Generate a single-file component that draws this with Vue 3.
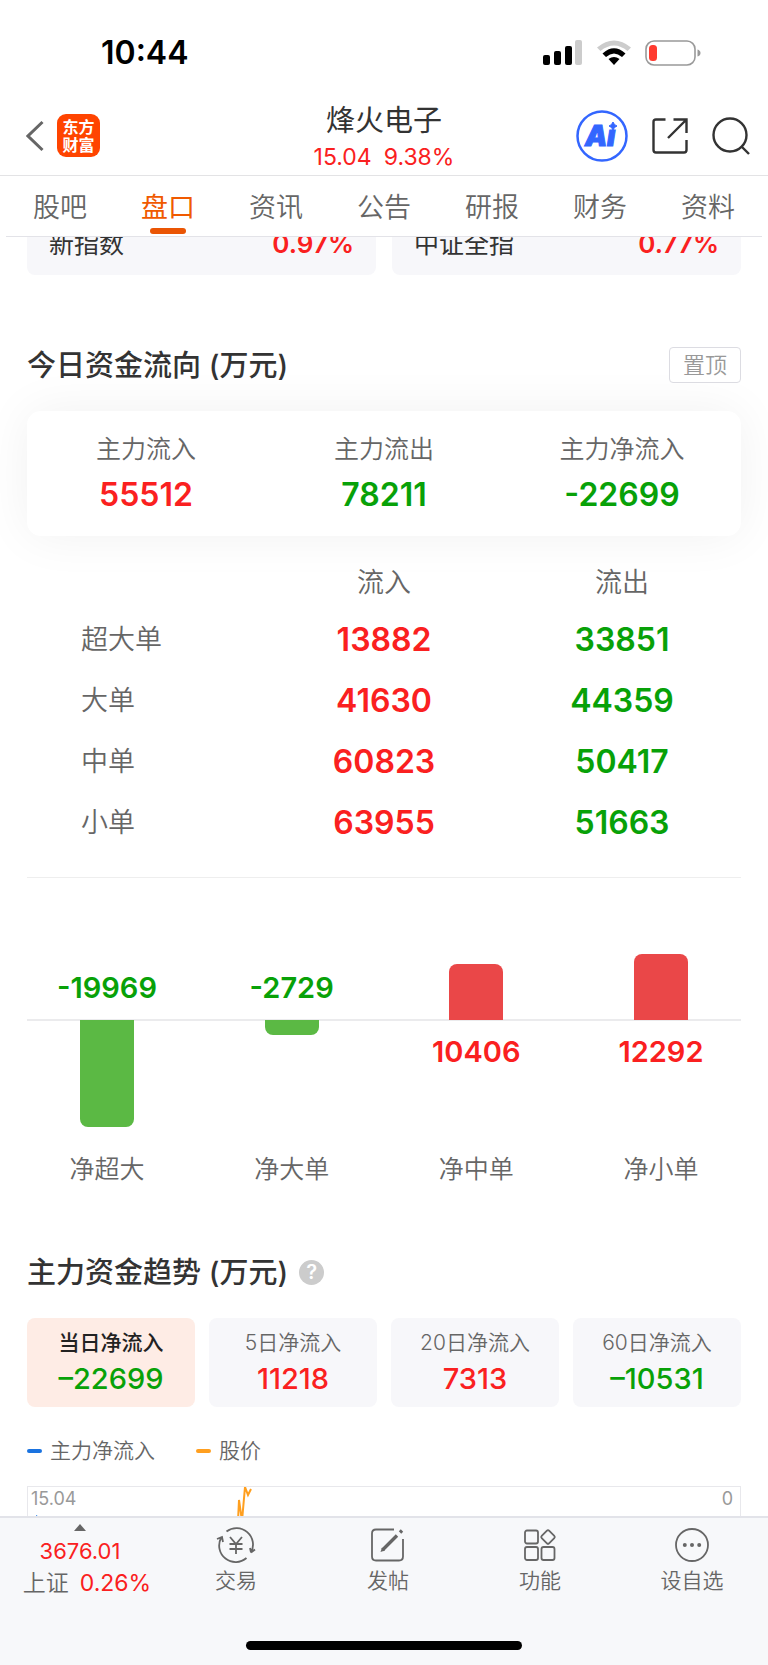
<script setup>
import { ref } from 'vue'

const navTabs = ['股吧', '盘口', '资讯', '公告', '研报', '财务', '资料']
const activeNav = ref('盘口')

const indices = [
  { name: '新指数', change: '0.97%' },
  { name: '中证全指', change: '0.77%' },
]

const summary = [
  { label: '主力流入', value: '55512', tone: 'up' },
  { label: '主力流出', value: '78211', tone: 'down' },
  { label: '主力净流入', value: '-22699', tone: 'down' },
]

const orders = [
  { name: '超大单', inflow: 13882, outflow: 33851 },
  { name: '大单', inflow: 41630, outflow: 44359 },
  { name: '中单', inflow: 60823, outflow: 50417 },
  { name: '小单', inflow: 63955, outflow: 51663 },
]

const nets = [
  { name: '净超大', value: -19969 },
  { name: '净大单', value: -2729 },
  { name: '净中单', value: 10406 },
  { name: '净小单', value: 12292 },
]
const maxBar = 107
const maxNet = Math.max(...nets.map((n) => Math.abs(n.value)))
const barHeight = (v) => ({ height: Math.round((Math.abs(v) / maxNet) * maxBar) + 'px' })

const periods = [
  { label: '当日净流入', value: '–22699', tone: 'down' },
  { label: '5日净流入', value: '11218', tone: 'up' },
  { label: '20日净流入', value: '7313', tone: 'up' },
  { label: '60日净流入', value: '–10531', tone: 'down' },
]
const activePeriod = ref('当日净流入')
</script>

<template>
  <div class="app">
    <div class="status">
      <span class="clock">10:44</span>
      <div class="status-icons">
        <svg width="40" height="26" viewBox="0 0 40 26" aria-hidden="true">
          <rect x="0" y="15" width="7" height="10" rx="2" />
          <rect x="11" y="11" width="7" height="14" rx="2" />
          <rect x="22" y="6" width="7" height="19" rx="2" />
          <rect x="32" y="0" width="7" height="25" rx="2" fill="#ccc" />
        </svg>
        <svg width="36" height="26" viewBox="0 0 36 26" aria-hidden="true">
          <path d="M1 7.500Q18-6.500 35 7.500L31.500 11Q18 0 4.500 11Z" fill="#ccc" />
          <path d="M6.500 13.500Q18 3 29.500 13.500L26 17Q18 10 10 17Z" />
          <path d="M12.500 19Q18 15 23.500 19L18 25Z" />
        </svg>
        <svg width="56" height="26" viewBox="0 0 56 26" aria-hidden="true">
          <rect x="1" y="1" width="49" height="24" rx="8" fill="none" stroke="#999" stroke-width="1.600" />
          <rect x="4" y="5" width="8" height="16" rx="3.500" fill="#ff3b30" />
          <path d="M52.500 9.500Q55.500 10.500 55.500 13Q55.500 15.500 52.500 16.500Z" fill="#999" />
        </svg>
      </div>
    </div>

    <header class="header">
      <div class="header-side header-home">
        <button class="icon-btn" aria-label="返回">
          <svg width="18" height="32" viewBox="0 0 18 32"><path d="M16.500 2L2 16L16.500 30" fill="none" stroke="#666" stroke-width="3" /></svg>
        </button>
        <a class="logo" href="#"><span>东方</span><span>财富</span></a>
      </div>
      <div class="stock">
        <h1>烽火电子</h1>
        <p class="up"><span>15.04</span><span>9.38%</span></p>
      </div>
      <div class="header-side header-actions">
        <button class="icon-btn" aria-label="智能助手">
          <svg width="52" height="52" viewBox="0 0 52 52">
            <circle cx="26" cy="26" r="24.500" fill="none" stroke="#3366ff" stroke-width="2.500" />
            <text class="ai" x="9" y="36">A</text>
            <text class="ai" x="31" y="36">ı</text>
            <path d="M37 12Q38 15 41 16Q38 17 37 20Q36 17 33 16Q36 15 37 12Z" fill="#3366ff" stroke="#3366ff" />
          </svg>
        </button>
        <button class="icon-btn" aria-label="分享">
          <svg width="36" height="36" viewBox="0 0 36 36" fill="none" stroke="#333" stroke-width="2.400">
            <path d="M13.500 1.500H4Q1.500 1.500 1.500 4V32Q1.500 34.500 4 34.500H32Q34.500 34.500 34.500 32V22M21.500 1.500H34.500V15M34 2L16 20" />
          </svg>
        </button>
        <button class="icon-btn" aria-label="搜索">
          <svg width="38" height="38" viewBox="0 0 38 38" fill="none" stroke="#333" stroke-width="2.400">
            <circle cx="18" cy="18" r="16.500" /><path d="M29.500 29.500L37 37" />
          </svg>
        </button>
      </div>
    </header>

    <nav class="nav">
      <a v-for="t in navTabs" :key="t" href="#" :class="{ active: t === activeNav }" @click.prevent="activeNav = t">{{ t }}</a>
    </nav>

    <main class="content">
      <div class="indices">
        <div v-for="i in indices" :key="i.name" class="index-card">
          <span>{{ i.name }}</span><strong class="up">{{ i.change }}</strong>
        </div>
      </div>

      <section class="flow">
        <div class="section-head">
          <h2>今日资金流向 (万元)</h2>
          <button class="pin">置顶</button>
        </div>
        <div class="summary">
          <div v-for="s in summary" :key="s.label">
            <span class="label">{{ s.label }}</span>
            <strong :class="s.tone">{{ s.value }}</strong>
          </div>
        </div>
        <table>
          <thead>
            <tr><td></td><th scope="col">流入</th><th scope="col">流出</th></tr>
          </thead>
          <tbody>
            <tr v-for="o in orders" :key="o.name">
              <th scope="row">{{ o.name }}</th>
              <td class="up">{{ o.inflow }}</td>
              <td class="down">{{ o.outflow }}</td>
            </tr>
          </tbody>
        </table>
      </section>

      <section class="net" aria-label="净流入">
        <div class="plot above">
          <div v-for="n in nets" :key="n.name" class="col">
            <span v-if="n.value < 0" class="down">{{ n.value }}</span>
            <i v-else class="bar bar-up" :style="barHeight(n.value)"></i>
          </div>
        </div>
        <div class="plot below">
          <div v-for="n in nets" :key="n.name" class="col">
            <i v-if="n.value < 0" class="bar bar-down" :style="barHeight(n.value)"></i>
            <span v-else class="up">{{ n.value }}</span>
          </div>
        </div>
        <div class="plot names">
          <div v-for="n in nets" :key="n.name" class="col">{{ n.name }}</div>
        </div>
      </section>

      <section class="trend">
        <div class="trend-head">
          <h2>主力资金趋势 (万元)</h2>
          <button class="help" aria-label="说明">?</button>
        </div>
        <div class="periods">
          <button v-for="p in periods" :key="p.label" :class="{ active: p.label === activePeriod }" @click="activePeriod = p.label">
            <span>{{ p.label }}</span>
            <strong :class="p.tone">{{ p.value }}</strong>
          </button>
        </div>
        <div class="legend">
          <span class="key-main">主力净流入</span>
          <span class="key-price">股价</span>
        </div>
        <div class="chart">
          <span>15.04</span>
          <svg class="lines" width="230" height="160" viewBox="0 0 230 160" fill="none" aria-hidden="true">
            <path d="M210 34L211 13L214 34L217 0L220 8L223 2" stroke="#ff9f1f" stroke-width="2" />
            <path d="M8 28L13 31V38L8 34Z" fill="#1a73e0" />
          </svg>
          <span>0</span>
        </div>
      </section>
    </main>

    <footer class="bottom">
      <div class="actions">
        <button class="market">
          <svg width="12" height="7" viewBox="0 0 12 7" aria-hidden="true"><path d="M0 7L6 0L12 7Z" fill="#666" /></svg>
          <span class="up">3676.01</span>
          <span class="market-row">上证<b class="up">0.26%</b></span>
        </button>
        <button>
          <svg width="40" height="36" viewBox="0 0 40 36" fill="none" stroke="#666" stroke-width="1.800">
            <path d="M10.500 4.500A16.500 16.500 0 0 1 35 25.500M35 25.500L34 21M35 25.500L39 22.500M30.500 31A16.500 16.500 0 0 1 5 11M1 12L6 10L7 15" />
            <path d="M14 10L20 17L26 10M20 17V27M13.500 17H26.500M13.500 22H26.500" />
          </svg>
          <span>交易</span>
        </button>
        <button>
          <svg width="40" height="36" viewBox="0 0 40 36" fill="none" stroke="#666" stroke-width="1.800">
            <path d="M26 2.500H8Q4 2.500 4 6.500V29.500Q4 33.500 8 33.500H31Q35 33.500 35 29.500V12" />
            <path d="M14.500 23L29 8.500M32 5.500L34 3.500" stroke-width="3.400" />
            <path d="M12.500 25L14 20.500L17 23.500Z" fill="#666" stroke="none" />
          </svg>
          <span>发帖</span>
        </button>
        <button>
          <svg width="40" height="36" viewBox="0 0 40 36" fill="none" stroke="#666" stroke-width="1.800">
            <rect x="5" y="3.500" width="13" height="13" rx="2" />
            <rect x="5" y="20" width="13" height="13" rx="2" />
            <rect x="21.500" y="20" width="13" height="13" rx="2" />
            <rect x="22.800" y="4.800" width="10.400" height="10.400" rx="1.500" transform="rotate(45 28 10)" />
          </svg>
          <span>功能</span>
        </button>
        <button>
          <svg width="40" height="36" viewBox="0 0 40 36" fill="none" stroke="#666" stroke-width="1.800">
            <circle cx="20" cy="18" r="16" />
            <g fill="#666" stroke="none"><circle cx="12.800" cy="18" r="2" /><circle cx="20" cy="18" r="2" /><circle cx="27.200" cy="18" r="2" /></g>
          </svg>
          <span>设自选</span>
        </button>
      </div>
      <div class="home-bar"></div>
    </footer>
  </div>
</template>

<style>
body {
  background: #fff;
}
</style>

<style scoped>
.app,
.app * {
  box-sizing: border-box;
}
.app {
  display: flex;
  flex-direction: column;
  height: 100vh;
  overflow: hidden;
  background: #fff;
  color: #333;
  font-family: Inter, "Noto Sans CJK SC", sans-serif;
  font-size: 25px;
  line-height: 32px;
  font-weight: 350;
}
h1,
h2,
p {
  margin: 0;
}
button {
  padding: 0;
  border: 0;
  background: none;
  color: inherit;
  font: inherit;
}
a {
  color: inherit;
  text-decoration: none;
}
svg {
  display: block;
  flex: none;
}
.up {
  color: #fa2020;
}
.down {
  color: #08a108;
}

.status {
  flex: none;
  display: flex;
  align-items: center;
  justify-content: space-between;
  height: 96px;
  padding: 10px 67px 0 101px;
}
.clock {
  color: #000;
  font-size: 32px;
  font-weight: 600;
}
.status-icons {
  display: flex;
  gap: 13px;
}

.header {
  flex: none;
  display: grid;
  grid-template-columns: 1fr auto 1fr;
  align-items: center;
  height: 80px;
  padding: 0 18px;
  border-bottom: 1px solid #e3e3e5;
}
.header-side {
  display: flex;
  align-items: center;
  gap: 13px;
}
.header-home {
  padding-left: 8px;
}
.header-actions {
  justify-content: flex-end;
  gap: 24px;
}
.logo {
  display: flex;
  flex-direction: column;
  justify-content: center;
  align-items: center;
  width: 43px;
  height: 43px;
  border-radius: 9px;
  background: #ff4400;
  color: #fff;
  font-size: 16px;
  line-height: 18px;
  font-weight: 700;
}
.ai {
  fill: #3366ff;
  stroke: #3366ff;
  stroke-width: 1;
  font-size: 28px;
  font-weight: 900;
  font-style: italic;
}
.stock {
  padding-top: 2px;
  text-align: center;
}
.stock h1 {
  font-size: 29px;
  line-height: 40px;
  font-weight: 400;
}
.stock p {
  display: flex;
  justify-content: center;
  gap: 12px;
  font-size: 23px;
  line-height: 32px;
  font-weight: 400;
}

.nav {
  flex: none;
  display: grid;
  grid-template-columns: repeat(7, 1fr);
  height: 61px;
  margin: 0 6px;
  border-bottom: 1px solid #e3e3e8;
  color: #666;
  font-size: 27px;
  line-height: 64px;
  text-align: center;
}
.nav a {
  position: relative;
  height: 60px;
}
.nav .active {
  color: #f05a00;
  font-weight: 400;
}
.nav .active::after {
  content: "";
  position: absolute;
  left: 50%;
  bottom: 2px;
  width: 36px;
  height: 6px;
  margin-left: -18px;
  border-radius: 3px;
  background: #ea5504;
}

.content {
  flex: 1;
  min-height: 0;
  overflow: hidden;
  padding: 0 27px;
}
.indices {
  display: grid;
  grid-template-columns: 1fr 1fr;
  gap: 16px;
  margin-top: -25px;
}
.index-card {
  display: flex;
  align-items: center;
  justify-content: space-between;
  height: 63px;
  padding: 0 22px;
  border-radius: 8px;
  background: #f7f7fa;
  font-weight: 400;
}
.index-card strong {
  font-size: 26px;
  font-weight: 600;
}

.flow {
  padding-bottom: 24px;
  border-bottom: 1px solid #eee;
}
.section-head {
  display: flex;
  align-items: center;
  justify-content: space-between;
  margin: 72px 0 28px;
}
h2 {
  font-size: 29px;
  line-height: 38px;
  font-weight: 500;
}
.section-head h2,
.trend-head h2 {
  height: 36px;
}
.pin {
  height: 36px;
  padding: 0 13px;
  border: 1px solid #dcdce2;
  border-radius: 4px;
  background: #fff;
  color: #999;
  font-size: 22px;
}
.summary {
  display: grid;
  grid-template-columns: repeat(3, 1fr);
  padding: 22px 0 23px;
  border-radius: 14px;
  background: #fff;
  box-shadow: 0 0 50px rgba(0, 0, 0, 0.06);
  text-align: center;
}
.summary div {
  display: flex;
  flex-direction: column;
  gap: 12px;
}
.label {
  color: #666;
}
.summary strong,
tbody td {
  font-size: 32px;
  line-height: 36px;
  font-weight: 600;
}
table {
  width: 100%;
  margin-top: 20px;
  border-collapse: collapse;
  table-layout: fixed;
  text-align: center;
}
th,
td {
  padding: 0;
}
th {
  color: #666;
  font-size: 27px;
  font-weight: 350;
}
thead tr {
  height: 53px;
}
tbody tr {
  height: 61px;
}
tbody th {
  padding-left: 54px;
  text-align: left;
}

.plot {
  display: flex;
  justify-content: space-between;
}
.col {
  display: flex;
  flex-direction: column;
  align-items: center;
  width: 160px;
}
.above {
  height: 143px;
  border-bottom: 2px solid #ebebed;
}
.above .col {
  justify-content: flex-end;
}
.below {
  height: 132px;
}
.col span {
  margin: 15px 0;
  font-size: 29px;
  font-weight: 600;
}
.bar {
  width: 54px;
}
.bar-up {
  margin-bottom: -1px;
  border-radius: 8px 8px 0 0;
  background: #ea4748;
}
.bar-down {
  margin-top: -1px;
  border-radius: 0 0 8px 8px;
  background: #5bb944;
}
.names {
  color: #666;
}

.trend-head {
  display: flex;
  align-items: center;
  gap: 11px;
  margin: 69px 0 28px;
}
.help {
  width: 25px;
  height: 25px;
  border-radius: 50%;
  background: #ccc;
  color: #fff;
  font-size: 20px;
  line-height: 25px;
  font-weight: 600;
}
.periods {
  display: grid;
  grid-template-columns: repeat(4, 1fr);
  gap: 14px;
}
.periods button {
  display: flex;
  flex-direction: column;
  align-items: center;
  justify-content: center;
  gap: 4px;
  height: 89px;
  padding-bottom: 3px;
  border-radius: 8px;
  background: #f7f7fa;
}
.periods span {
  color: #666;
  font-size: 21px;
}
.periods strong {
  font-size: 29px;
  font-weight: 500;
}
.periods .active {
  background: #feece5;
}
.periods .active span {
  color: #222;
  font-weight: 500;
}
.legend {
  display: flex;
  gap: 41px;
  margin: 28px 0 19px;
  color: #666;
  font-size: 21px;
}
.legend span {
  display: flex;
  align-items: center;
  gap: 8px;
}
.legend span::before {
  content: "";
  width: 15px;
  height: 4px;
  border-radius: 2px;
  background: #1a73e0;
}
.legend .key-price::before {
  background: #ff9f1f;
}
.chart {
  position: relative;
  display: flex;
  justify-content: space-between;
  height: 160px;
  padding: 0 7px 0 3px;
  border: 1px solid #e8e8ec;
  color: #999;
  font-size: 18px;
  line-height: 24px;
  font-weight: 400;
}
.lines {
  position: absolute;
  left: 0;
  top: 0;
}

.bottom {
  flex: none;
  display: flex;
  flex-direction: column;
  align-items: center;
  justify-content: space-between;
  height: 149px;
  padding: 6px 0 15px;
  border-top: 2px solid #e2e3e9;
  background: #f7f8fa;
  color: #666;
}
.actions {
  display: grid;
  grid-template-columns: 20fr repeat(4, 19fr);
  width: 100%;
}
.actions button {
  display: flex;
  flex-direction: column;
  align-items: center;
  padding-top: 3px;
  gap: 2px;
  font-size: 21px;
}
.actions .market {
  padding-top: 0;
  gap: 0;
  font-size: 22px;
}
.market .up {
  margin-top: 4px;
  font-weight: 400;
}
.market-row {
  display: flex;
  gap: 11px;
  padding-left: 14px;
  font-size: 23px;
}
.market .market-row .up {
  margin: 0;
}
.home-bar {
  width: 36%;
  height: 9px;
  border-radius: 5px;
  background: #000;
}
</style>
